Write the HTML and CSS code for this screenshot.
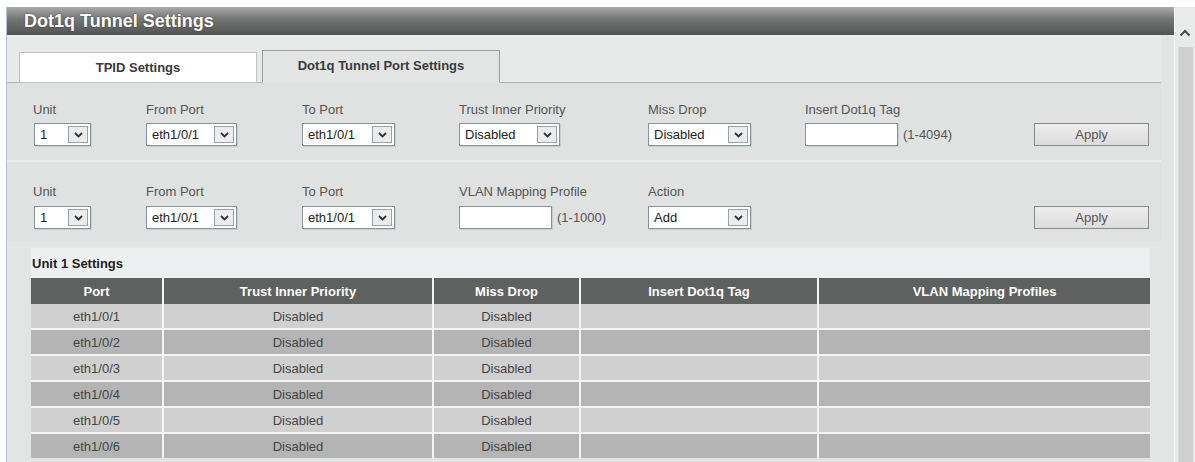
FILE: index.html
```html
<!DOCTYPE html>
<html lang="en">
<head>
    <meta charset="UTF-8">
    <title>Dot1q Tunnel Settings</title>
    <link rel="stylesheet" href="styles.css">
</head>
<body>
<div class="page">
    <div class="frame">
        <div class="title-bar">Dot1q Tunnel Settings</div>

        <div class="tab-bar">
            <div class="tab">TPID Settings</div>
            <div class="tab active">Dot1q Tunnel Port Settings</div>
        </div>

        <div class="form-block first">
            <div class="field">
                <label>Unit</label>
                <div class="select w-unit"><span>1</span><i class="arrow"><svg width="9" height="6" viewBox="0 0 9 6"><polyline points="1,1 4.5,4.5 8,1"/></svg></i></div>
            </div>
            <div class="field">
                <label>From Port</label>
                <div class="select w-from"><span>eth1/0/1</span><i class="arrow"><svg width="9" height="6" viewBox="0 0 9 6"><polyline points="1,1 4.5,4.5 8,1"/></svg></i></div>
            </div>
            <div class="field">
                <label>To Port</label>
                <div class="select w-to"><span>eth1/0/1</span><i class="arrow"><svg width="9" height="6" viewBox="0 0 9 6"><polyline points="1,1 4.5,4.5 8,1"/></svg></i></div>
            </div>
            <div class="field">
                <label>Trust Inner Priority</label>
                <div class="select w-trust"><span>Disabled</span><i class="arrow"><svg width="9" height="6" viewBox="0 0 9 6"><polyline points="1,1 4.5,4.5 8,1"/></svg></i></div>
            </div>
            <div class="field">
                <label>Miss Drop</label>
                <div class="select w-miss"><span>Disabled</span><i class="arrow"><svg width="9" height="6" viewBox="0 0 9 6"><polyline points="1,1 4.5,4.5 8,1"/></svg></i></div>
            </div>
            <div class="field">
                <label>Insert Dot1q Tag</label>
                <div class="input-line"><input type="text" class="text-input"><span class="hint">(1-4094)</span></div>
            </div>
            <div class="field spacer"></div>
            <button class="apply">Apply</button>
        </div>

        <div class="form-block second">
            <div class="field">
                <label>Unit</label>
                <div class="select w-unit"><span>1</span><i class="arrow"><svg width="9" height="6" viewBox="0 0 9 6"><polyline points="1,1 4.5,4.5 8,1"/></svg></i></div>
            </div>
            <div class="field">
                <label>From Port</label>
                <div class="select w-from"><span>eth1/0/1</span><i class="arrow"><svg width="9" height="6" viewBox="0 0 9 6"><polyline points="1,1 4.5,4.5 8,1"/></svg></i></div>
            </div>
            <div class="field">
                <label>To Port</label>
                <div class="select w-to"><span>eth1/0/1</span><i class="arrow"><svg width="9" height="6" viewBox="0 0 9 6"><polyline points="1,1 4.5,4.5 8,1"/></svg></i></div>
            </div>
            <div class="field">
                <label>VLAN Mapping Profile</label>
                <div class="input-line"><input type="text" class="text-input"><span class="hint">(1-1000)</span></div>
            </div>
            <div class="field">
                <label>Action</label>
                <div class="select w-miss"><span>Add</span><i class="arrow"><svg width="9" height="6" viewBox="0 0 9 6"><polyline points="1,1 4.5,4.5 8,1"/></svg></i></div>
            </div>
            <div class="field"></div>
            <div class="field spacer"></div>
            <button class="apply">Apply</button>
        </div>

        <div class="table-section">
            <div class="unit-title">Unit 1 Settings</div>
            <table class="port-table">
                <colgroup>
                    <col style="width:132px">
                    <col style="width:270px">
                    <col style="width:147px">
                    <col style="width:238px">
                    <col style="width:332px">
                </colgroup>
                <thead>
                    <tr>
                        <th>Port</th>
                        <th>Trust Inner Priority</th>
                        <th>Miss Drop</th>
                        <th>Insert Dot1q Tag</th>
                        <th>VLAN Mapping Profiles</th>
                    </tr>
                </thead>
                <tbody id="portList"></tbody>
            </table>
        </div>
    </div>

    <div class="scrollbar">
        <div class="scroll-up"><svg width="12" height="8" viewBox="0 0 12 8"><polyline points="1.5,6.5 6,2 10.5,6.5"/></svg></div>
        <div class="scroll-track"><div class="scroll-thumb"></div></div>
    </div>
</div>

<script>
    const ports = ['eth1/0/1', 'eth1/0/2', 'eth1/0/3', 'eth1/0/4', 'eth1/0/5', 'eth1/0/6'];
    const portList = document.getElementById('portList');

    ports.forEach((port) => {
        const row = document.createElement('tr');
        row.innerHTML = `
            <td>${port}</td>
            <td>Disabled</td>
            <td>Disabled</td>
            <td></td>
            <td></td>
        `;
        portList.appendChild(row);
    });
</script>
</body>
</html>
```

FILE: styles.css
```css
body {
    margin: 0;
    font-family: "Liberation Sans", Arial, sans-serif;
    background-color: #fff;
    overflow: hidden;
}

.page {
    display: flex;
    padding: 7px 0 0 6px;
    height: 455px;
}

.frame {
    width: 1168px;
    border-left: 1px solid #b7c6ce;
    background-color: #e3e4e4;
    overflow: hidden;
}

.title-bar {
    height: 28px;
    line-height: 29px;
    padding-left: 17px;
    background: linear-gradient(#a9abab, #777979 40%, #515252);
    color: #fff;
    font-size: 18px;
    font-weight: bold;
    text-shadow: 0 0 2px #3c3c3c;
}

/* tabs */
.tab-bar {
    display: flex;
    align-items: flex-end;
    gap: 5px;
    height: 47px;
    margin-right: 13px;
    padding-left: 12px;
    background-color: #e8eaea;
    border-bottom: 1px solid #b3b5b5;
}

.tab {
    width: 236px;
    height: 29px;
    line-height: 30px;
    margin-bottom: -1px;
    text-align: center;
    font-size: 13px;
    font-weight: bold;
    color: #3a3a3a;
    background-color: #fff;
    border: 1px solid #c2c2c2;
}

.tab.active {
    height: 31px;
    background-color: #e3e4e4;
    border-color: #9c9e9e;
    border-bottom-color: #e3e4e4;
}

/* forms */
.form-block {
    display: grid;
    grid-template-columns: 113px 156px 157px 189px 157px 1fr 0 115px;
    align-items: end;
    margin-right: 13px;
    padding: 0 12px 0 26px;
    background-color: #e0e1e1;
}

.form-block.first {
    padding-top: 19px;
    padding-bottom: 14px;
    border-bottom: 2px solid #ededed;
}

.form-block.second {
    padding-top: 22px;
    padding-bottom: 12px;
}

.field label {
    display: block;
    height: 16px;
    line-height: 16px;
    margin-bottom: 5px;
    font-size: 13px;
    color: #555;
}

.form-block.second .field label {
    margin-bottom: 6px;
}

.select {
    display: flex;
    align-items: center;
    justify-content: space-between;
    box-sizing: border-box;
    height: 23px;
    padding: 0 2px 0 5px;
    background-color: #fff;
    border: 1px solid #8595a0;
    box-shadow: 1px 1px 0 #c8cdd0;
    font-size: 13px;
    color: #222;
}

.select .arrow {
    display: flex;
    align-items: center;
    justify-content: center;
    width: 18px;
    height: 15px;
    background-color: #ececec;
    border: 1px solid #9aa3a8;
}

.select svg polyline {
    fill: none;
    stroke: #333;
    stroke-width: 1.8;
}

.w-unit { width: 57px; margin-left: 1px; }
.w-from { width: 91px; }
.w-to { width: 93px; }
.w-trust { width: 101px; }
.w-miss { width: 103px; }

.input-line {
    display: flex;
    align-items: center;
}

.text-input {
    box-sizing: border-box;
    width: 93px;
    height: 23px;
    margin: 0;
    background-color: #fff;
    border: 1px solid #8595a0;
    box-shadow: 1px 1px 0 #c8cdd0;
}

.hint {
    margin-left: 5px;
    font-size: 13px;
    color: #555;
}

.apply {
    height: 23px;
    margin: 0;
    font-family: "Liberation Sans", Arial, sans-serif;
    font-size: 13px;
    color: #555;
    background: linear-gradient(#ededed, #dcdcdc);
    border: 1px solid #8a8a8a;
    cursor: pointer;
}

/* table */
.table-section {
    width: 1119px;
    margin: 7px 0 0 24px;
}

.unit-title {
    height: 30px;
    line-height: 31px;
    padding-left: 1px;
    background-color: #edf0f0;
    font-size: 13px;
    font-weight: bold;
    color: #222;
}

.port-table {
    width: 1119px;
    border-collapse: collapse;
    table-layout: fixed;
}

.port-table th {
    height: 26px;
    padding: 0;
    background-color: #5f6060;
    color: #fff;
    font-size: 13px;
    font-weight: bold;
    border-left: 2px solid #f4f4f4;
}

.port-table td {
    height: 24px;
    padding: 0;
    text-align: center;
    font-size: 13px;
    color: #444;
    background-color: #d0d0d0;
    border-left: 2px solid #f4f4f4;
    border-top: 2px solid #f4f4f4;
}

.port-table th:first-child,
.port-table td:first-child {
    border-left: none;
}

.port-table tbody tr:nth-child(even) td {
    background-color: #b4b4b4;
}

.port-table tbody tr:first-child td {
    border-top: none;
}

/* scrollbar */
.scrollbar {
    width: 20px;
    background-color: #e9ebeb;
    border-left: 1px solid #f6f6f6;
}

.scroll-up {
    display: flex;
    justify-content: center;
    padding-top: 22px;
    height: 18px;
}

.scroll-up polyline {
    fill: none;
    stroke: #4a4a4a;
    stroke-width: 2;
}

.scroll-track {
    height: 420px;
    padding: 0 2px 0 3px;
}

.scroll-thumb {
    height: 100%;
    background-color: #cfcfcf;
    border-left: 1px solid #dcdcdc;
}
```
